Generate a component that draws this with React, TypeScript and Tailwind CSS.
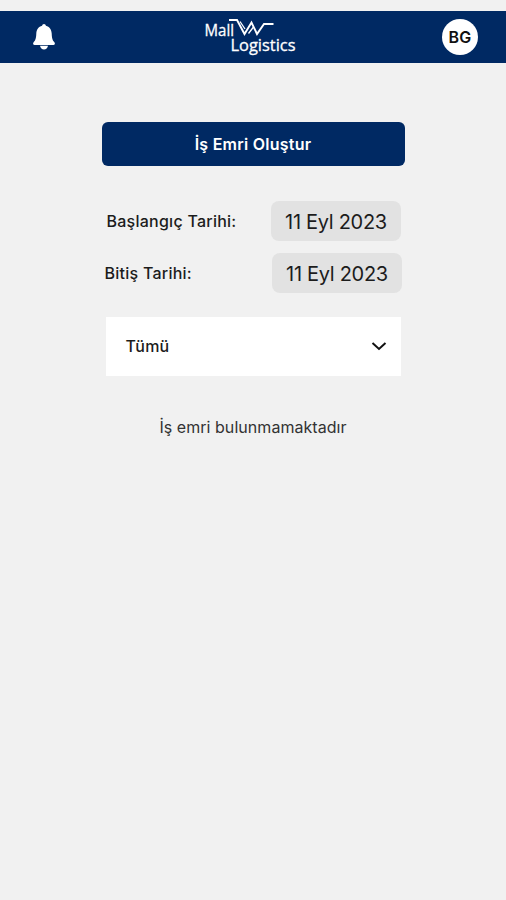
const DateRow = ({ label, value, className }: { label: string; value: string; className: string }) => {
    return (
        <div className={`flex items-center justify-between ${className}`}>
            <span className="text-base font-medium tracking-[0.25px] text-[#1c1c1c]">{label}</span>
            <button className="h-10 w-[130px] rounded-lg bg-[#e2e2e2] pl-px pt-0.5 text-xl tracking-[-0.3px] text-[#1c1c1c] whitespace-nowrap">
                {value}
            </button>
        </div>
    );
};

const Logo = () => {
    return (
        <svg
            width="94"
            height="40"
            viewBox="0 0 94 40"
            fill="none"
            className="ml-1 font-['Open_Sans',sans-serif]"
            aria-label="Mall Logistics"
        >
            <g fill="#fff" stroke="#fff" strokeWidth="0.3" fontSize="16">
                <text x="0.500" y="18.500" textLength="29.500" lengthAdjust="spacingAndGlyphs">Mall</text>
                <text x="26.500" y="33.500" textLength="65" lengthAdjust="spacingAndGlyphs">Logistics</text>
            </g>
            <path d="M25 3h8l7.500 14 7-11.500 5.500 11.500 7-10h9.500" stroke="#fff" strokeWidth="1.900" />
            <path d="M36 4.500l5 7.500M44.500 16.500l5-6.500" stroke="#fff" strokeWidth="1.300" />
        </svg>
    );
};

const Header = () => {
    return (
        <header className="flex h-[52px] items-center justify-between bg-[#002963] pl-8 pr-7">
            <svg width="24" height="28" viewBox="0 0 24 28" fill="#fff" aria-label="Bildirimler">
                <path d="M12 1c-1 0-1.700.8-1.900 1.700C6.500 3.500 4.500 6.500 4.300 10.500 4.100 16 3.200 17.500 1.600 19.200c-1 1.200-.5 2.800 1 2.800h18.800c1.500 0 2-1.600 1-2.800-1.600-1.700-2.500-3.200-2.700-8.700-.2-4-2.200-7-5.800-7.800C13.700 1.800 13 1 12 1z" />
                <path d="M8 22.800h8c-.4 2.200-2 3.700-4 3.700s-3.600-1.500-4-3.700z" />
            </svg>
            <Logo />
            <div className="flex size-9 items-center justify-center rounded-full bg-white text-base font-semibold tracking-[0.3px] text-[#111]">
                BG
            </div>
        </header>
    );
};

const App = () => {
    return (
        <div className="min-h-screen bg-[#f1f1f1] pt-[11px] font-['Inter',sans-serif]">
            <Header />
            <main className="mx-auto flex w-[303px] flex-col pt-[59px]">
                <button className="h-[44px] rounded-md bg-[#002963] text-base font-semibold tracking-[0.25px] text-white">
                    İş Emri Oluştur
                </button>
                <DateRow label="Başlangıç Tarihi:" value="11 Eyl 2023" className="mt-[35px] pl-[5px] pr-1" />
                <DateRow label="Bitiş Tarihi:" value="11 Eyl 2023" className="mt-3 px-[3px]" />
                <div className="mx-1 mt-6 flex h-[59px] items-center justify-between bg-white pb-0.5 pl-5 pr-[14px] text-base font-medium tracking-[0.2px] text-[#1c1c1c]">
                    Tümü
                    <svg width="16" height="10" viewBox="0 0 16 10" fill="none">
                        <path d="M1.500 2l6.500 6 6.500-6" stroke="#111" strokeWidth="2" />
                    </svg>
                </div>
                <p className="mt-[39px] text-center text-base tracking-[0.05px] text-[#333]">İş emri bulunmamaktadır</p>
            </main>
        </div>
    );
};

export default App;
